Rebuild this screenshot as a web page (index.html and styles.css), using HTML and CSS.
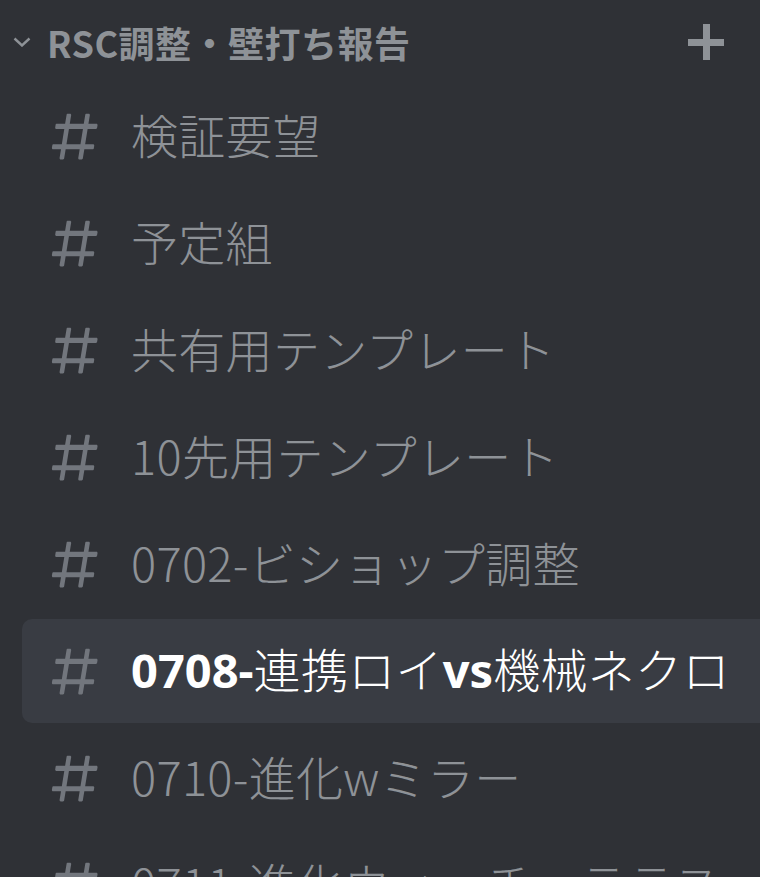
FILE: index.html
```html
<!DOCTYPE html>
<html lang="ja">
<head>
    <meta charset="UTF-8">
    <title>RSC調整・壁打ち報告</title>
    <link rel="stylesheet" href="styles.css">
</head>
<body>
    <div class="sidebar">
        <div class="category">
            <svg class="chevron" width="18" height="10" viewBox="0 0 18 10">
                <polyline points="1.5,1.5 9,8.5 16.5,1.5" fill="none" stroke="#8e9297" stroke-width="2.4"/>
            </svg>
            <span class="category-name">RSC調整・壁打ち報告</span>
            <svg class="plus" width="36" height="36" viewBox="0 0 36 36">
                <rect x="15" y="0" width="7" height="36" fill="#8e9297"/>
                <rect x="0" y="15" width="36" height="7" fill="#8e9297"/>
            </svg>
        </div>

        <ul class="channels">
            <li class="channel">
                <svg class="hash" viewBox="0 0 24 24" preserveAspectRatio="none"><path d="M5.89 21C5.58 21 5.34 20.72 5.39 20.41L6 17H2.6C2.28 17 2.05 16.72 2.1 16.41L2.28 15.41C2.32 15.17 2.53 15 2.770 15H6.35L7.41 9H4.01C3.69 9 3.46 8.72 3.51 8.41L3.69 7.41C3.73 7.17 3.94 7 4.18 7H7.76L8.4 3.41C8.44 3.17 8.65 3 8.89 3H9.87C10.18 3 10.42 3.28 10.37 3.59L9.76 7H15.76L16.4 3.41C16.44 3.17 16.65 3 16.89 3H17.87C18.18 3 18.42 3.28 18.37 3.59L17.76 7H21.16C21.48 7 21.71 7.28 21.66 7.59L21.48 8.59C21.44 8.83 21.23 9 20.99 9H17.41L16.35 15H19.75C20.07 15 20.3 15.28 20.25 15.59L20.07 16.59C20.03 16.83 19.82 17 19.58 17H16L15.36 20.59C15.32 20.83 15.11 21 14.87 21H13.89C13.58 21 13.34 20.72 13.39 20.41L14 17H8L7.36 20.59C7.32 20.83 7.11 21 6.87 21H5.89ZM9.41 9L8.35 15H14.35L15.41 9H9.41Z"/></svg>
                <span class="name">検証要望</span>
            </li>
            <li class="channel">
                <svg class="hash" viewBox="0 0 24 24" preserveAspectRatio="none"><path d="M5.89 21C5.58 21 5.34 20.72 5.39 20.41L6 17H2.6C2.28 17 2.05 16.72 2.1 16.41L2.28 15.41C2.32 15.17 2.53 15 2.77 15H6.35L7.41 9H4.01C3.69 9 3.46 8.72 3.51 8.41L3.69 7.41C3.73 7.17 3.94 7 4.18 7H7.76L8.4 3.41C8.44 3.17 8.65 3 8.89 3H9.87C10.18 3 10.42 3.28 10.37 3.59L9.76 7H15.76L16.4 3.41C16.44 3.17 16.65 3 16.89 3H17.87C18.18 3 18.42 3.28 18.37 3.59L17.76 7H21.16C21.48 7 21.71 7.28 21.66 7.59L21.48 8.59C21.44 8.83 21.23 9 20.99 9H17.41L16.35 15H19.75C20.07 15 20.3 15.28 20.25 15.59L20.07 16.59C20.03 16.83 19.82 17 19.58 17H16L15.36 20.59C15.32 20.83 15.11 21 14.87 21H13.89C13.58 21 13.34 20.72 13.39 20.41L14 17H8L7.36 20.59C7.32 20.83 7.11 21 6.87 21H5.89ZM9.41 9L8.35 15H14.35L15.41 9H9.41Z"/></svg>
                <span class="name">予定組</span>
            </li>
            <li class="channel">
                <svg class="hash" viewBox="0 0 24 24" preserveAspectRatio="none"><path d="M5.89 21C5.58 21 5.34 20.72 5.39 20.41L6 17H2.6C2.28 17 2.05 16.72 2.1 16.41L2.28 15.41C2.32 15.17 2.53 15 2.77 15H6.35L7.41 9H4.01C3.69 9 3.46 8.72 3.51 8.41L3.69 7.41C3.73 7.17 3.94 7 4.18 7H7.76L8.4 3.41C8.44 3.17 8.65 3 8.89 3H9.87C10.18 3 10.42 3.28 10.37 3.59L9.76 7H15.76L16.4 3.41C16.44 3.17 16.65 3 16.89 3H17.87C18.18 3 18.42 3.28 18.37 3.59L17.76 7H21.16C21.48 7 21.71 7.28 21.66 7.59L21.48 8.59C21.44 8.83 21.23 9 20.99 9H17.41L16.35 15H19.75C20.07 15 20.3 15.28 20.25 15.59L20.07 16.59C20.03 16.83 19.82 17 19.58 17H16L15.36 20.59C15.32 20.83 15.11 21 14.87 21H13.89C13.58 21 13.34 20.72 13.39 20.41L14 17H8L7.36 20.59C7.32 20.83 7.11 21 6.87 21H5.89ZM9.41 9L8.35 15H14.35L15.41 9H9.41Z"/></svg>
                <span class="name">共有用テンプレート</span>
            </li>
            <li class="channel">
                <svg class="hash" viewBox="0 0 24 24" preserveAspectRatio="none"><path d="M5.89 21C5.58 21 5.34 20.72 5.39 20.41L6 17H2.6C2.28 17 2.05 16.72 2.1 16.41L2.28 15.41C2.32 15.17 2.53 15 2.77 15H6.35L7.41 9H4.01C3.69 9 3.46 8.72 3.51 8.41L3.69 7.41C3.73 7.17 3.94 7 4.18 7H7.76L8.4 3.41C8.44 3.17 8.65 3 8.89 3H9.87C10.18 3 10.42 3.28 10.37 3.59L9.76 7H15.76L16.4 3.41C16.44 3.17 16.65 3 16.89 3H17.87C18.18 3 18.42 3.28 18.37 3.59L17.76 7H21.16C21.48 7 21.71 7.28 21.66 7.59L21.48 8.59C21.44 8.83 21.23 9 20.99 9H17.41L16.35 15H19.75C20.07 15 20.3 15.28 20.25 15.59L20.07 16.59C20.03 16.83 19.82 17 19.58 17H16L15.36 20.59C15.32 20.83 15.11 21 14.87 21H13.89C13.58 21 13.34 20.72 13.39 20.41L14 17H8L7.36 20.59C7.32 20.83 7.11 21 6.87 21H5.89ZM9.41 9L8.35 15H14.35L15.41 9H9.41Z"/></svg>
                <span class="name">10先用テンプレート</span>
            </li>
            <li class="channel">
                <svg class="hash" viewBox="0 0 24 24" preserveAspectRatio="none"><path d="M5.89 21C5.58 21 5.34 20.72 5.39 20.41L6 17H2.6C2.28 17 2.05 16.72 2.1 16.41L2.28 15.41C2.32 15.17 2.53 15 2.77 15H6.35L7.41 9H4.01C3.69 9 3.46 8.72 3.51 8.41L3.69 7.41C3.73 7.17 3.94 7 4.18 7H7.76L8.4 3.41C8.44 3.17 8.65 3 8.89 3H9.87C10.18 3 10.42 3.28 10.37 3.59L9.76 7H15.76L16.4 3.41C16.44 3.17 16.65 3 16.89 3H17.87C18.18 3 18.42 3.28 18.37 3.59L17.76 7H21.16C21.48 7 21.71 7.28 21.66 7.59L21.48 8.59C21.44 8.83 21.23 9 20.99 9H17.41L16.35 15H19.75C20.07 15 20.3 15.28 20.25 15.59L20.07 16.59C20.03 16.83 19.82 17 19.58 17H16L15.36 20.59C15.32 20.83 15.11 21 14.87 21H13.89C13.58 21 13.34 20.72 13.39 20.41L14 17H8L7.36 20.59C7.32 20.83 7.11 21 6.87 21H5.89ZM9.41 9L8.35 15H14.35L15.41 9H9.41Z"/></svg>
                <span class="name">0702-ビショップ調整</span>
            </li>
            <li class="channel selected">
                <svg class="hash" viewBox="0 0 24 24" preserveAspectRatio="none"><path d="M5.89 21C5.58 21 5.34 20.72 5.39 20.41L6 17H2.6C2.28 17 2.05 16.72 2.1 16.41L2.28 15.41C2.32 15.17 2.53 15 2.77 15H6.35L7.41 9H4.01C3.69 9 3.46 8.72 3.51 8.41L3.69 7.41C3.73 7.17 3.94 7 4.18 7H7.76L8.4 3.41C8.44 3.17 8.65 3 8.89 3H9.87C10.18 3 10.42 3.28 10.37 3.59L9.76 7H15.76L16.4 3.41C16.44 3.17 16.65 3 16.89 3H17.87C18.18 3 18.42 3.28 18.37 3.59L17.76 7H21.16C21.48 7 21.71 7.28 21.66 7.59L21.48 8.59C21.44 8.83 21.23 9 20.99 9H17.41L16.35 15H19.75C20.07 15 20.3 15.28 20.25 15.59L20.07 16.59C20.03 16.83 19.82 17 19.58 17H16L15.36 20.59C15.32 20.83 15.11 21 14.87 21H13.89C13.58 21 13.34 20.72 13.39 20.41L14 17H8L7.36 20.59C7.32 20.83 7.11 21 6.87 21H5.89ZM9.41 9L8.35 15H14.35L15.41 9H9.41Z"/></svg>
                <span class="name"><b>0708-</b>連携ロイ<b>vs</b>機械ネクロ</span>
            </li>
            <li class="channel">
                <svg class="hash" viewBox="0 0 24 24" preserveAspectRatio="none"><path d="M5.89 21C5.58 21 5.34 20.72 5.39 20.41L6 17H2.6C2.28 17 2.05 16.72 2.1 16.41L2.28 15.41C2.32 15.17 2.53 15 2.77 15H6.35L7.41 9H4.01C3.69 9 3.46 8.72 3.51 8.41L3.69 7.41C3.73 7.17 3.94 7 4.18 7H7.76L8.4 3.41C8.44 3.17 8.65 3 8.89 3H9.87C10.18 3 10.42 3.28 10.37 3.59L9.76 7H15.76L16.4 3.41C16.44 3.17 16.65 3 16.89 3H17.87C18.18 3 18.42 3.28 18.37 3.59L17.76 7H21.16C21.48 7 21.71 7.28 21.66 7.59L21.48 8.59C21.44 8.83 21.23 9 20.99 9H17.41L16.35 15H19.75C20.07 15 20.3 15.28 20.25 15.59L20.07 16.59C20.03 16.83 19.82 17 19.58 17H16L15.36 20.59C15.32 20.83 15.11 21 14.87 21H13.89C13.58 21 13.34 20.72 13.39 20.41L14 17H8L7.36 20.59C7.32 20.83 7.11 21 6.87 21H5.89ZM9.41 9L8.35 15H14.35L15.41 9H9.41Z"/></svg>
                <span class="name">0710-進化wミラー</span>
            </li>
            <li class="channel">
                <svg class="hash" viewBox="0 0 24 24" preserveAspectRatio="none"><path d="M5.89 21C5.58 21 5.34 20.72 5.39 20.41L6 17H2.6C2.28 17 2.05 16.72 2.1 16.41L2.28 15.41C2.32 15.17 2.53 15 2.77 15H6.35L7.41 9H4.01C3.69 9 3.46 8.72 3.51 8.41L3.69 7.41C3.73 7.17 3.94 7 4.18 7H7.76L8.4 3.41C8.44 3.17 8.65 3 8.89 3H9.87C10.18 3 10.42 3.28 10.37 3.59L9.76 7H15.76L16.4 3.41C16.44 3.17 16.65 3 16.89 3H17.87C18.18 3 18.42 3.28 18.37 3.59L17.76 7H21.16C21.48 7 21.71 7.28 21.66 7.59L21.48 8.59C21.44 8.83 21.23 9 20.99 9H17.41L16.35 15H19.75C20.07 15 20.3 15.28 20.25 15.59L20.07 16.59C20.03 16.83 19.82 17 19.58 17H16L15.36 20.59C15.32 20.83 15.11 21 14.87 21H13.89C13.58 21 13.34 20.72 13.39 20.41L14 17H8L7.36 20.59C7.32 20.83 7.11 21 6.87 21H5.89ZM9.41 9L8.35 15H14.35L15.41 9H9.41Z"/></svg>
                <span class="name">0711-進化ウィッチ・テラス</span>
            </li>
        </ul>
    </div>
</body>
</html>
```

FILE: styles.css
```css
html, body {
    margin: 0;
    padding: 0;
    background: #2f3136;
    overflow: hidden;
}

.sidebar {
    width: 760px;
    height: 877px;
    overflow: hidden;
    font-family: "Noto Sans CJK JP", "Noto Sans", sans-serif;
}

.category {
    display: flex;
    align-items: center;
    height: 84px;
    padding: 0 36px 0 13px;
    color: #8e9297;
}

.chevron {
    flex: none;
    margin-right: 16px;
}

.category-name {
    flex: 1;
    font-size: 36px;
    font-weight: 700;
    letter-spacing: 0.5px;
    line-height: 1;
}

.plus {
    flex: none;
}

.channels {
    list-style: none;
    margin: 0;
    padding: 0 0 0 22px;
}

.channel {
    display: flex;
    align-items: center;
    height: 104px;
    width: 760px;
    margin-bottom: 3px;
    padding-left: 25px;
    box-sizing: border-box;
    border-radius: 10px;
    color: #8e9297;
    font-size: 47px;
    font-weight: 300;
    line-height: 1;
    white-space: nowrap;
}

.hash {
    flex: none;
    width: 56px;
    height: 61px;
    margin-right: 28px;
    fill: #72767d;
}

.name {
    padding-bottom: 5px;
    letter-spacing: 0.3px;
}

.channel.selected {
    background: #393c43;
    color: #ffffff;
}

.channel b {
    font-family: "Noto Sans", "Open Sans", sans-serif;
    font-weight: 700;
    letter-spacing: 0;
}
```
